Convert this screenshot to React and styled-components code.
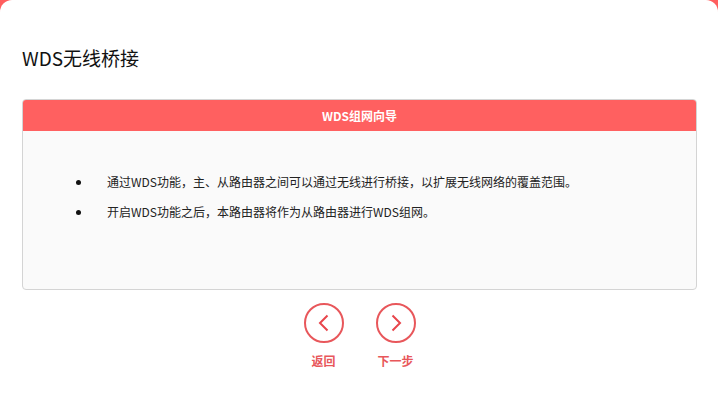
import React from "react";
import styled, { createGlobalStyle } from "styled-components";

const GlobalStyle = createGlobalStyle`
  html, body {
    margin: 0;
    padding: 0;
    background: #ff5e5e;
    font-family: "Noto Sans CJK SC", "Noto Sans", sans-serif;
  }
`;

const items = [
  "通过WDS功能，主、从路由器之间可以通过无线进行桥接，以扩展无线网络的覆盖范围。",
  "开启WDS功能之后，本路由器将作为从路由器进行WDS组网。",
];

function CircleButton({ dir, label }) {
  return (
    <NavButton>
      <Circle>
        <svg width="20" height="20" viewBox="0 0 20 20">
          <path
            d={dir === "left" ? "M13.5 2.5 L6 10 L13.5 17.5" : "M6.5 2.5 L14 10 L6.5 17.5"}
            fill="none"
            stroke="#e8454b"
            strokeWidth="2"
          />
        </svg>
      </Circle>
      <NavLabel>{label}</NavLabel>
    </NavButton>
  );
}

export default function App() {
  return (
    <>
      <GlobalStyle />
      <Page>
        <Title>WDS无线桥接</Title>
        <Panel>
          <PanelHeader>WDS组网向导</PanelHeader>
          <PanelBody>
            <List>
              {items.map((t) => (
                <Item key={t}>{t}</Item>
              ))}
            </List>
          </PanelBody>
        </Panel>
        <Nav>
          <CircleButton dir="left" label="返回" />
          <CircleButton dir="right" label="下一步" />
        </Nav>
      </Page>
    </>
  );
}

const Page = styled.div`
  background: #fff;
  border-radius: 12px 12px 0 0;
  height: 419px;
  box-sizing: border-box;
  padding: 41px 21px 0 22px;
`;

const Title = styled.h1`
  margin: 0;
  font-size: 19px;
  font-weight: normal;
  color: #111;
  line-height: 34px;
`;

const Panel = styled.div`
  margin-top: 24px;
  border: 1px solid #d4d4d4;
  border-radius: 4px;
  overflow: hidden;
  background: #fafafa;
`;

const PanelHeader = styled.div`
  background: #ff6060;
  color: #fff;
  font-size: 12px;
  font-weight: bold;
  text-align: center;
  height: 31px;
  line-height: 31px;
`;

const PanelBody = styled.div`
  height: 158px;
  padding-top: 36px;
  box-sizing: border-box;
`;

const List = styled.ul`
  margin: 0;
  padding: 0 0 0 84px;
  list-style: none;
`;

const Item = styled.li`
  position: relative;
  font-size: 12px;
  color: #222;
  line-height: 30px;

  &::before {
    content: "";
    position: absolute;
    left: -31px;
    top: 13px;
    width: 5px;
    height: 5px;
    border-radius: 50%;
    background: #111;
  }
`;

const Nav = styled.div`
  display: flex;
  justify-content: center;
  gap: 32px;
  margin-top: 13px;
`;

const NavButton = styled.div`
  display: flex;
  flex-direction: column;
  align-items: center;
  width: 40px;
  cursor: pointer;
`;

const Circle = styled.div`
  width: 36px;
  height: 36px;
  border: 2px solid #e8575b;
  border-radius: 50%;
  display: flex;
  align-items: center;
  justify-content: center;
`;

const NavLabel = styled.div`
  margin-top: 9px;
  font-size: 12px;
  font-weight: bold;
  color: #e8575b;
  white-space: nowrap;
`;
